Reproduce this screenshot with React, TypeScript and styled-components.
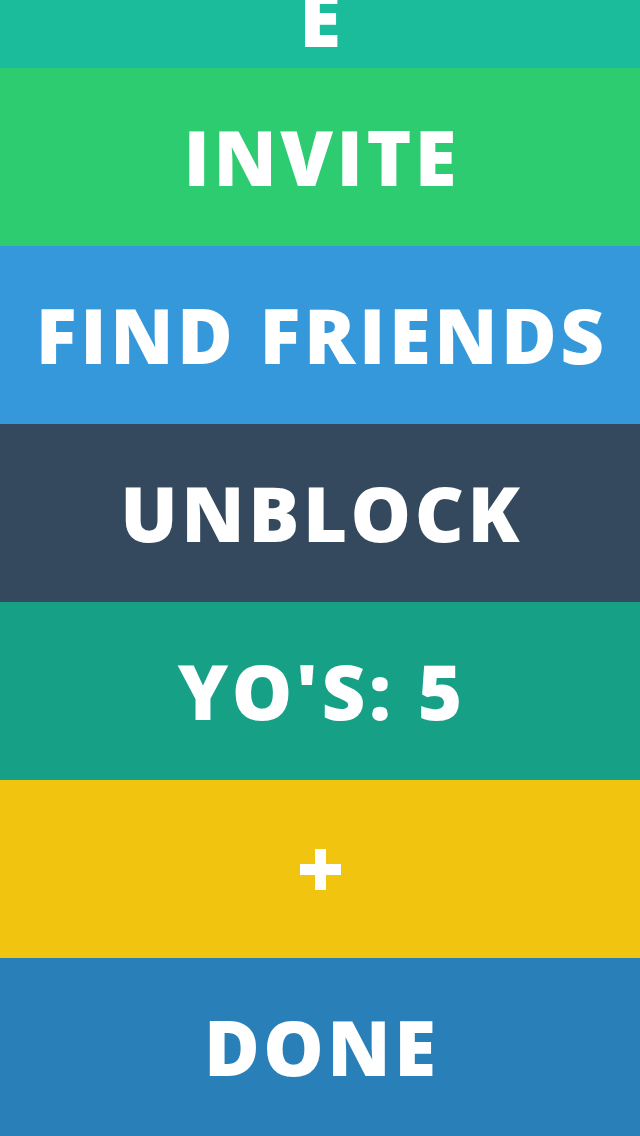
import styled, { createGlobalStyle } from "styled-components";

const GlobalStyle = createGlobalStyle`
  html, body {
    margin: 0;
    padding: 0;
    background: #2980b9;
  }
  body {
    font-family: "Open Sans", "Liberation Sans", sans-serif;
  }
`;

const rows = [
  { label: "INVITE", color: "#2ecc71" },
  { label: "FIND FRIENDS", color: "#3498db" },
  { label: "UNBLOCK", color: "#34495e" },
  { label: "YO'S: 5", color: "#16a085" },
  { label: "+", color: "#f1c40f", plus: true },
  { label: "DONE", color: "#2980b9" },
];

export default function App() {
  return (
    <>
      <GlobalStyle />
      <Screen>
        <TopRow>
          <TopLabel>E</TopLabel>
        </TopRow>
        {rows.map((row) => (
          <Row key={row.label} $color={row.color}>
            {row.plus ? <Plus /> : <Label>{row.label}</Label>}
          </Row>
        ))}
      </Screen>
    </>
  );
}

const Screen = styled.div`
  width: 640px;
  height: 1136px;
  overflow: hidden;
  display: flex;
  flex-direction: column;
`;

const Row = styled.button<{ $color: string }>`
  height: 178px;
  flex-shrink: 0;
  border: 0;
  padding: 0;
  margin: 0;
  background: ${(p) => p.$color};
  display: flex;
  align-items: center;
  justify-content: center;
  cursor: pointer;
`;

const TopRow = styled.div`
  height: 68px;
  flex-shrink: 0;
  background: #1abc9c;
  overflow: hidden;
  display: flex;
  align-items: flex-end;
  justify-content: center;
`;

const Label = styled.span`
  color: #fff;
  font-family: "Open Sans", "Liberation Sans", sans-serif;
  font-weight: 800;
  font-size: 76px;
  line-height: 1;
  letter-spacing: 3.5px;
  padding-left: 3.5px;
  white-space: nowrap;
`;

const TopLabel = styled(Label)`
  margin-bottom: 12px;
`;

const Plus = styled.span`
  position: relative;
  width: 41px;
  height: 41px;

  &::before,
  &::after {
    content: "";
    position: absolute;
    background: #fff;
  }
  &::before {
    left: 0;
    right: 0;
    top: 15px;
    height: 11px;
  }
  &::after {
    top: 0;
    bottom: 0;
    left: 15px;
    width: 11px;
  }
`;
